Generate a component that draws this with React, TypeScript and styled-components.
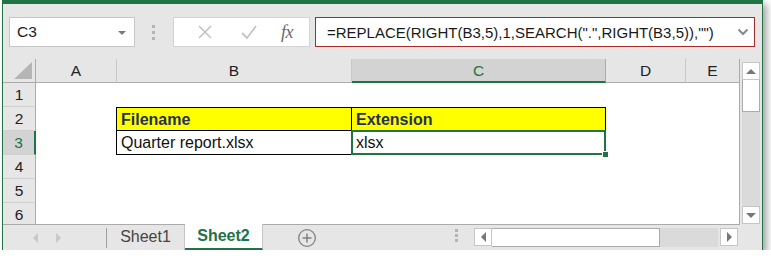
import React from "react";
import styled, { createGlobalStyle, css } from "styled-components";

const GREEN = "#217346";

const GlobalStyle = createGlobalStyle`
	html, body {
		margin: 0;
		padding: 0;
		background: #fff;
	}
	body {
		font-family: "Liberation Sans", Arial, sans-serif;
	}
`;

const columns = [
	{ name: "A", width: 81 },
	{ name: "B", width: 235 },
	{ name: "C", width: 254 },
	{ name: "D", width: 80 },
	{ name: "E", width: 54 },
];

const App = () => {
	return (
		<>
			<GlobalStyle />
			<Window>
				<FormulaBar>
					<NameBox>
						<span>C3</span>
						<SmallCaret />
					</NameBox>
					<Grip>
						<i />
						<i />
						<i />
					</Grip>
					<ButtonGroup>
						<IconSlot>
							<svg width="14" height="14" viewBox="0 0 14 14">
								<path d="M1 1 L13 13 M13 1 L1 13" stroke="#c4c4c4" strokeWidth="1.6" fill="none" />
							</svg>
						</IconSlot>
						<IconSlot>
							<svg width="16" height="14" viewBox="0 0 16 14">
								<path d="M1 8 L6 13 L15 1" stroke="#c4c4c4" strokeWidth="1.8" fill="none" />
							</svg>
						</IconSlot>
						<Fx>fx</Fx>
					</ButtonGroup>
					<FormulaInput>
						<FormulaText>=REPLACE(RIGHT(B3,5),1,SEARCH(".",RIGHT(B3,5)),"")</FormulaText>
						<svg width="12" height="8" viewBox="0 0 12 8">
							<path d="M1.5 1.5 L6 6 L10.5 1.5" stroke="#888" strokeWidth="2" fill="none" />
						</svg>
					</FormulaInput>
				</FormulaBar>

				<SheetArea>
					<Sheet>
						<Corner>
							<svg width="20" height="18" viewBox="0 0 20 18">
								<polygon points="19,0 19,17 1,17" fill="#b5b5b5" />
							</svg>
						</Corner>
						{columns.map((c) => (
							<ColHeader key={c.name} $active={c.name === "C"}>
								{c.name}
							</ColHeader>
						))}

						{[1, 2, 3, 4, 5, 6].map((row) => (
							<React.Fragment key={row}>
								<RowHeader $active={row === 3}>{row}</RowHeader>
								<Cell />
								{row === 2 ? (
									<>
										<TableCell $head $first>Filename</TableCell>
										<TableCell $head>Extension</TableCell>
									</>
								) : row === 3 ? (
									<>
										<TableCell $first>Quarter report.xlsx</TableCell>
										<TableCell>
											xlsx
											<Selection>
												<FillHandle />
											</Selection>
										</TableCell>
									</>
								) : (
									<>
										<Cell />
										<Cell />
									</>
								)}
								<Cell />
								<Cell />
							</React.Fragment>
						))}
					</Sheet>
					<VScroll>
						<ScrollButton>
							<Tri $dir="up" />
						</ScrollButton>
						<VThumb />
						<VTrack />
						<ScrollButton>
							<Tri $dir="down" />
						</ScrollButton>
					</VScroll>
				</SheetArea>

				<TabBar>
					<TabNav>
						<Tri $dir="left" $light />
						<Tri $dir="right" $light />
					</TabNav>
					<TabDivider />
					<SheetTab>Sheet1</SheetTab>
					<SheetTab $active>Sheet2</SheetTab>
					<AddSheet>
						<svg width="20" height="20" viewBox="0 0 20 20">
							<circle cx="10" cy="10" r="8.3" stroke="#808080" strokeWidth="1.3" fill="none" />
							<path d="M10 5.5 V14.5 M5.5 10 H14.5" stroke="#808080" strokeWidth="1.5" />
						</svg>
					</AddSheet>
					<TabSpacer />
					<Grip $small>
						<i />
						<i />
						<i />
					</Grip>
					<HScroll>
						<ScrollButton>
							<Tri $dir="left" />
						</ScrollButton>
						<HThumb />
						<HTrack />
						<ScrollButton $gap>
							<Tri $dir="right" />
						</ScrollButton>
					</HScroll>
				</TabBar>
			</Window>
		</>
	);
};

const Window = styled.div`
	margin-left: 2px;
	width: 761px;
	height: 250px;
	box-sizing: border-box;
	border-top: 4px solid ${GREEN};
	border-left: 1px solid ${GREEN};
	border-right: 1px solid ${GREEN};
	background: #e6e6e6;
	box-shadow: 4px 4px 7px rgba(0, 0, 0, 0.35);
	display: flex;
	flex-direction: column;
	overflow: hidden;
`;

const FormulaBar = styled.div`
	height: 55px;
	display: flex;
	align-items: flex-start;
	padding: 13px 0 0 6px;
	box-sizing: border-box;
`;

const NameBox = styled.div`
	width: 126px;
	height: 30px;
	box-sizing: border-box;
	background: #fff;
	border: 1px solid #c6c6c6;
	display: flex;
	align-items: center;
	justify-content: space-between;
	padding: 0 8px 0 7px;
	font-size: 15.5px;
	color: #222;
`;

const SmallCaret = styled.span`
	width: 0;
	height: 0;
	border-left: 4px solid transparent;
	border-right: 4px solid transparent;
	border-top: 4px solid #7a7a7a;
	margin-top: 1px;
`;

const Grip = styled.div<{ $small?: boolean }>`
	width: 4px;
	margin: ${(p) => (p.$small ? "4px 0 0 0" : "8px 17px 0 17px")};
	display: flex;
	flex-direction: column;
	gap: ${(p) => (p.$small ? "2px" : "3px")};
	i {
		display: block;
		width: 3px;
		height: 3px;
		background: #b4b4b4;
	}
`;

const ButtonGroup = styled.div`
	width: 137px;
	height: 30px;
	box-sizing: border-box;
	background: #fff;
	border: 1px solid #d4d4d4;
	display: flex;
	align-items: center;
	padding-left: 9px;
`;

const IconSlot = styled.div`
	width: 44px;
	display: flex;
	justify-content: center;
	align-items: center;
`;

const Fx = styled.span`
	margin-left: 10px;
	font-family: "Liberation Serif", "Times New Roman", serif;
	font-style: italic;
	font-size: 18px;
	color: #6a6a6a;
	letter-spacing: -0.5px;
`;

const FormulaInput = styled.div`
	margin-left: 5px;
	width: 440px;
	height: 30px;
	box-sizing: border-box;
	background: #fff;
	border: 1px solid #a52a2a;
	display: flex;
	align-items: center;
	justify-content: space-between;
	padding: 0 5px 0 11px;
`;

const FormulaText = styled.span`
	font-size: 15px;
	color: #1a1a1a;
	white-space: nowrap;
`;

const SheetArea = styled.div`
	height: 166px;
	display: flex;
`;

const Sheet = styled.div`
	width: 737px;
	height: 166px;
	overflow: hidden;
	display: grid;
	grid-template-columns: 33px ${columns.map((c) => `${c.width}px`).join(" ")};
	grid-template-rows: repeat(7, 24px);
	background: #fff;
	border-right: 1px solid #ababab;
	border-bottom: 1px solid #ababab;
	box-sizing: border-box;
`;

const headerBase = css`
	background: #e6e6e6;
	box-sizing: border-box;
	display: flex;
	align-items: center;
	justify-content: center;
	font-size: 15.5px;
	color: #222;
`;

const Corner = styled.div`
	${headerBase};
	align-items: flex-end;
	justify-content: flex-end;
	padding: 0 2px 2px 0;
	border-right: 1px solid #ababab;
	border-bottom: 1px solid #ababab;
`;

const ColHeader = styled.div<{ $active?: boolean }>`
	${headerBase};
	padding-top: 1px;
	border-right: 1px solid #c8c8c8;
	border-bottom: 1px solid #ababab;
	${(p) =>
		p.$active &&
		css`
			background: #d3d3d3;
			color: ${GREEN};
			border-bottom: 2px solid ${GREEN};
			border-right-color: #ababab;
		`}
`;

const RowHeader = styled.div<{ $active?: boolean }>`
	${headerBase};
	border-right: 1px solid #ababab;
	border-bottom: 1px solid #d0d0d0;
	${(p) =>
		p.$active &&
		css`
			background: #d3d3d3;
			color: ${GREEN};
			border-right: 2px solid ${GREEN};
		`}
`;

const Cell = styled.div`
	background: #fff;
`;

const TableCell = styled.div<{ $head?: boolean; $first?: boolean }>`
	position: relative;
	box-sizing: border-box;
	display: flex;
	align-items: center;
	padding-left: 4px;
	padding-top: 1px;
	font-size: 16px;
	color: #111;
	border-right: 1px solid #000;
	border-bottom: 1px solid #000;
	${(p) => p.$first && "border-left: 1px solid #000; margin-left: -1px;"}
	${(p) =>
		p.$head &&
		css`
			background: #ffff00;
			font-weight: bold;
			color: #26305a;
			border-top: 1px solid #000;
		`}
`;

const Selection = styled.div`
	position: absolute;
	left: -1px;
	top: -1px;
	right: -1px;
	bottom: -1px;
	border: 2px solid ${GREEN};
	pointer-events: none;
`;

const FillHandle = styled.div`
	position: absolute;
	right: -5px;
	bottom: -5px;
	width: 5px;
	height: 5px;
	background: ${GREEN};
	border: 1px solid #fff;
`;

const VScroll = styled.div`
	width: 18px;
	margin-top: 3px;
	height: 162px;
	display: flex;
	flex-direction: column;
	background: #dadada;
	margin-left: 2px;
`;

const ScrollButton = styled.div<{ $gap?: boolean }>`
	width: 18px;
	height: 18px;
	flex: none;
	box-sizing: border-box;
	background: #fff;
	border: 1px solid #c6c6c6;
	display: flex;
	align-items: center;
	justify-content: center;
	${(p) => p.$gap && "margin-left: 2px;"}
`;

const VThumb = styled.div`
	height: 32px;
	box-sizing: border-box;
	background: #fff;
	border: 1px solid #ababab;
	border-top: none;
	flex: none;
`;

const VTrack = styled.div`
	flex: 1;
`;

const Tri = styled.span<{ $dir: "up" | "down" | "left" | "right"; $light?: boolean }>`
	width: 0;
	height: 0;
	display: inline-block;
	${(p) => {
		const c = p.$light ? "#c8c8c8" : "#777";
		switch (p.$dir) {
			case "up":
				return `border-left:5px solid transparent;border-right:5px solid transparent;border-bottom:5px solid ${c};`;
			case "down":
				return `border-left:5px solid transparent;border-right:5px solid transparent;border-top:5px solid ${c};`;
			case "left":
				return `border-top:5px solid transparent;border-bottom:5px solid transparent;border-right:5px solid ${c};`;
			default:
				return `border-top:5px solid transparent;border-bottom:5px solid transparent;border-left:5px solid ${c};`;
		}
	}}
`;

const TabBar = styled.div`
	height: 25px;
	display: flex;
	align-items: stretch;
`;

const TabNav = styled.div`
	display: flex;
	align-items: center;
	justify-content: space-between;
	padding-left: 30px;
	width: 28px;
	margin-right: 45px;
`;

const TabDivider = styled.div`
	width: 1px;
	margin: 3px 0 2px;
	background: #a0a0a0;
`;

const SheetTab = styled.div<{ $active?: boolean }>`
	width: 78px;
	box-sizing: border-box;
	display: flex;
	align-items: center;
	justify-content: center;
	font-size: 16px;
	color: #444;
	padding-bottom: 2px;
	border-right: 1px solid #c6c6c6;
	${(p) =>
		p.$active &&
		css`
			background: #fff;
			color: ${GREEN};
			font-weight: bold;
			border-bottom: 2px solid ${GREEN};
			padding-bottom: 0;
			margin-top: -1px;
		`}
`;

const AddSheet = styled.div`
	margin-left: 34px;
	display: flex;
	align-items: center;
`;

const TabSpacer = styled.div`
	flex: 1;
`;

const HScroll = styled.div`
	margin: 3px 24px 3px 15px;
	width: 264px;
	height: 19px;
	display: flex;
`;

const HThumb = styled.div`
	width: 168px;
	height: 19px;
	box-sizing: border-box;
	background: #fff;
	border: 1px solid #ababab;
	border-left: none;
`;

const HTrack = styled.div`
	flex: 1;
	background: #dadada;
`;

export default App;
